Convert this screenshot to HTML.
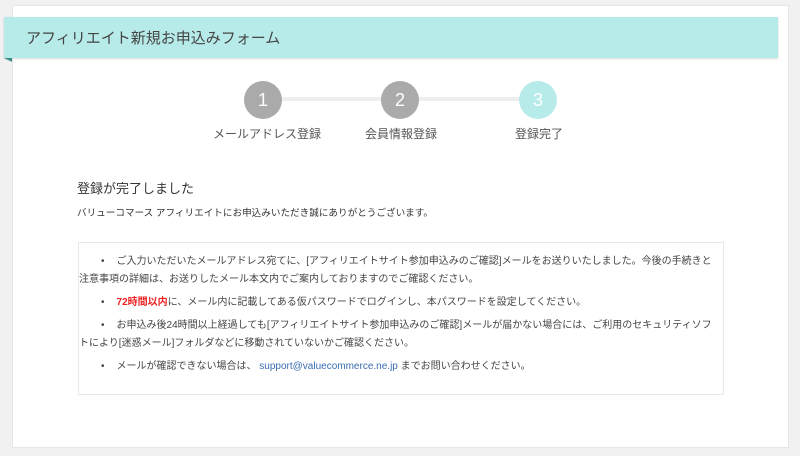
<!DOCTYPE html>
<html><head><meta charset="utf-8"><style>
*{margin:0;padding:0;box-sizing:border-box}
body{width:800px;height:456px;background:#f1f1f1;font-family:"Liberation Sans","Noto Sans CJK JP",sans-serif;color:#333;position:relative;overflow:hidden}
.card{position:absolute;left:12px;top:5px;width:777px;height:443px;background:#fff;border:1px solid #e6e6e6}
.hdr{position:absolute;left:4px;top:17px;width:774px;height:41px;background:#b7ebe9;box-shadow:0 1px 2px rgba(0,0,0,.15);font-size:15px;color:#444;padding:10px 0 0 22px}
.tri{position:absolute;left:4px;top:58px;width:0;height:0;border-top:4px solid #3a8f8c;border-left:8px solid transparent}
.line{position:absolute;top:97px;height:4px;background:#eeeeee}
.c{position:absolute;top:81px;width:38px;height:38px;border-radius:50%;background:#aaa;color:#fff;font-size:18px;text-align:center;line-height:38px}
.lbl{position:absolute;top:125px;font-size:12px;color:#555;width:160px;text-align:center}
h2{position:absolute;left:77px;top:178px;font-size:13px;font-weight:normal;color:#333}
.sub{position:absolute;left:77px;top:205px;font-size:9.6px;color:#333}
.box{position:absolute;left:78px;top:242px;width:646px;height:153px;border:1px solid #e8e8e8}
ul{list-style:none;padding:10px 10px 0 20px;font-size:10px;line-height:18px;color:#444}
li{margin-bottom:5px}
li:before{content:"•";margin-right:12px;margin-left:2px}
.red{color:#e22;font-weight:bold}
.lnk{color:#3a6db0}
</style></head><body>
<div class="card"></div>
<div class="hdr">アフィリエイト新規お申込みフォーム</div>
<div class="tri"></div>
<div class="line" style="left:263px;width:275px"></div>
<div class="c" style="left:244px">1</div>
<div class="c" style="left:381px">2</div>
<div class="c" style="left:519px;background:#b7ebe9">3</div>
<div class="lbl" style="left:187px">メールアドレス登録</div>
<div class="lbl" style="left:321px">会員情報登録</div>
<div class="lbl" style="left:459px">登録完了</div>
<h2>登録が完了しました</h2>
<div class="sub">バリューコマース アフィリエイトにお申込みいただき誠にありがとうございます。</div>
<div class="box"><ul>
<li>ご入力いただいたメールアドレス宛てに、[アフィリエイトサイト参加申込みのご確認]メールをお送りいたしました。今後の手続きと<br><span style="margin-left:-20px">注意事項の詳細は、お送りしたメール本文内でご案内しておりますのでご確認ください。</span></li>
<li><span class="red">72時間以内</span>に、メール内に記載してある仮パスワードでログインし、本パスワードを設定してください。</li>
<li>お申込み後24時間以上経過しても[アフィリエイトサイト参加申込みのご確認]メールが届かない場合には、ご利用のセキュリティソフ<br><span style="margin-left:-20px">トにより[迷惑メール]フォルダなどに移動されていないかご確認ください。</span></li>
<li>メールが確認できない場合は、 <span class="lnk">support@valuecommerce.ne.jp</span> までお問い合わせください。</li>
</ul></div>
</body></html>
